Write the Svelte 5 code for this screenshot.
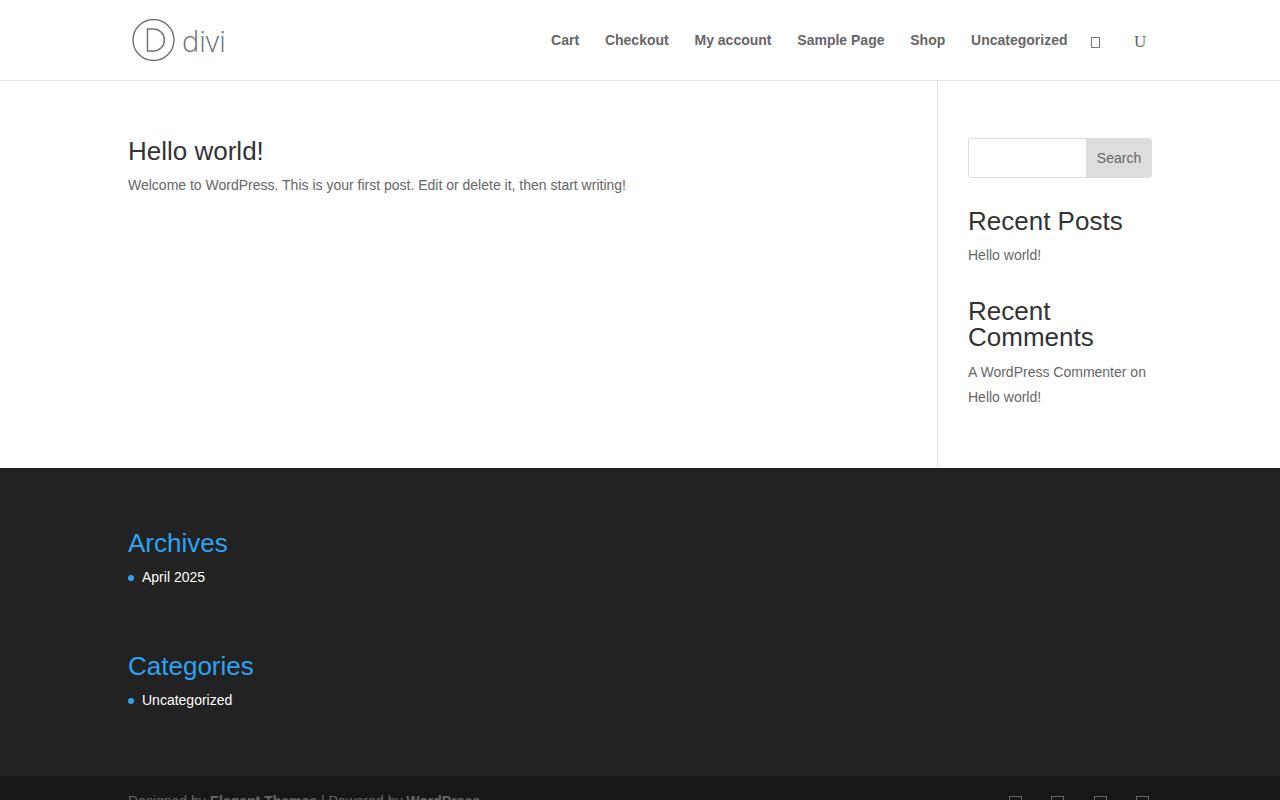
<script>
  const nav = ['Cart', 'Checkout', 'My account', 'Sample Page', 'Shop', 'Uncategorized'];
</script>

<div class="page">
  <header class="header">
    <div class="container bar">
      <svg class="logo" width="94" height="44" viewBox="0 0 94 44" aria-label="divi">
        <circle cx="21.5" cy="21" r="20.5" fill="none" stroke="#6b6f82" stroke-width="1.4" />
        <path d="M15.5 10h6a11 11 0 0 1 0 22h-6z" fill="none" stroke="#6b6f82" stroke-width="1.4" />
        <text x="50" y="32.5" class="logo-text">divi</text>
      </svg>
      <nav class="nav">
        {#each nav as item}<a href="#top">{item}</a>{/each}
        <span class="cart" aria-hidden="true"></span>
        <span class="search">U</span>
      </nav>
    </div>
  </header>

  <main class="main">
    <div class="container columns">
      <article class="content">
        <h1>Hello world!</h1>
        <p>Welcome to WordPress. This is your first post. Edit or delete it, then start writing!</p>
      </article>
      <aside class="sidebar">
        <div class="searchbox"><input /><button>Search</button></div>
        <h2>Recent Posts</h2>
        <p>Hello world!</p>
        <h2>Recent Comments</h2>
        <p class="comment">A WordPress Commenter on Hello world!</p>
      </aside>
    </div>
  </main>

  <section class="widgets">
    <div class="container">
      <h3>Archives</h3>
      <ul><li>April 2025</li></ul>
      <h3 class="second">Categories</h3>
      <ul><li>Uncategorized</li></ul>
    </div>
  </section>

  <footer class="bottom">
    <div class="container foot">
      <p>Designed by <b>Elegant Themes</b> | Powered by <b>WordPress</b></p>
      <div class="social"><i></i><i></i><i></i><i></i></div>
    </div>
  </footer>
</div>

<style>
  :global(body) { margin: 0; font-family: "Liberation Sans", Arial, sans-serif; background: #fff; overflow: hidden; }
  .page { height: 800px; overflow: hidden; color: #666; font-size: 14px; }
  .container { width: 1024px; margin: 0 auto; }
  .header { height: 80px; border-bottom: 1px solid #e4e4e4; }
  .bar { display: flex; justify-content: space-between; height: 80px; }
  .logo { margin: 19px 0 0 4px; }
  .logo-text { font-family: "Open Sans", sans-serif; font-weight: 300; font-size: 29px; fill: #6b6f82; }
  .nav { display: flex; align-items: flex-start; padding-top: 32px; font-weight: 700; color: #666; }
  .nav a { margin-right: 25.8px; color: #666; text-decoration: none; line-height: 16px; }
  .nav a:last-of-type { margin-right: 0; }
  .cart { display: block; box-sizing: border-box; margin: 5px 0 0 23.5px; width: 9px; height: 11px; border: 1px solid #777; }
  .search { display: block; margin: 1px 5.7px 0 34px; font-family: "Liberation Serif", serif; font-weight: 400; font-size: 17px; line-height: 18px; }
  .main { height: 387px; }
  .columns { display: flex; height: 387px; }
  .content { width: 809px; padding-top: 55px; }
  .content h1 { margin: 0; font-weight: 500; font-size: 26px; line-height: 30px; color: #333; }
  .content p { margin: 6px 0 0; line-height: 26px; }
  .sidebar { width: 184px; padding: 57px 0 0 30px; border-left: 1px solid #e4e4e4; }
  .searchbox { display: flex; height: 40px; box-sizing: border-box; border: 1px solid #ddd; border-radius: 3px; overflow: hidden; }
  .searchbox input { flex: 1; min-width: 0; border: 0; padding: 0; }
  .searchbox button { width: 65px; border: 0; background: #ddd; color: #666; font: 14px "Liberation Sans", Arial, sans-serif; padding: 0 0 0 1px; }
  .sidebar h2 { margin: 30px 0 0; font-weight: 500; font-size: 26px; line-height: 26px; color: #333; }
  .sidebar p { margin: 9px 0 0; line-height: 25px; }
  .sidebar p + h2 { margin-top: 30px; }
  .sidebar .comment { margin-top: 10px; }
  .widgets { height: 308px; background: #222; padding-top: 60px; box-sizing: border-box; }
  .widgets h3 { margin: 0; font-weight: 500; font-size: 26px; line-height: 30px; color: #2ea3f2; }
  .widgets .second { margin-top: 63px; }
  .widgets ul { margin: 8px 0 0; padding: 0; list-style: none; }
  .widgets li { color: #fff; padding-left: 14px; line-height: 22px; position: relative; }
  .widgets li::before { content: ""; position: absolute; left: 0; top: 9px; width: 6px; height: 6px; border-radius: 50%; background: #2ea3f2; }
  .bottom { height: 60px; background: #171717; }
  .foot { display: flex; justify-content: space-between; padding-top: 17px; }
  .foot p { margin: 0; color: #666; line-height: 16px; }
  .social { display: flex; gap: 29.5px; margin-right: 3px; padding-top: 3px; }
  .social i { display: block; width: 13px; height: 14px; box-sizing: border-box; border: 1px solid #666; }
</style>
